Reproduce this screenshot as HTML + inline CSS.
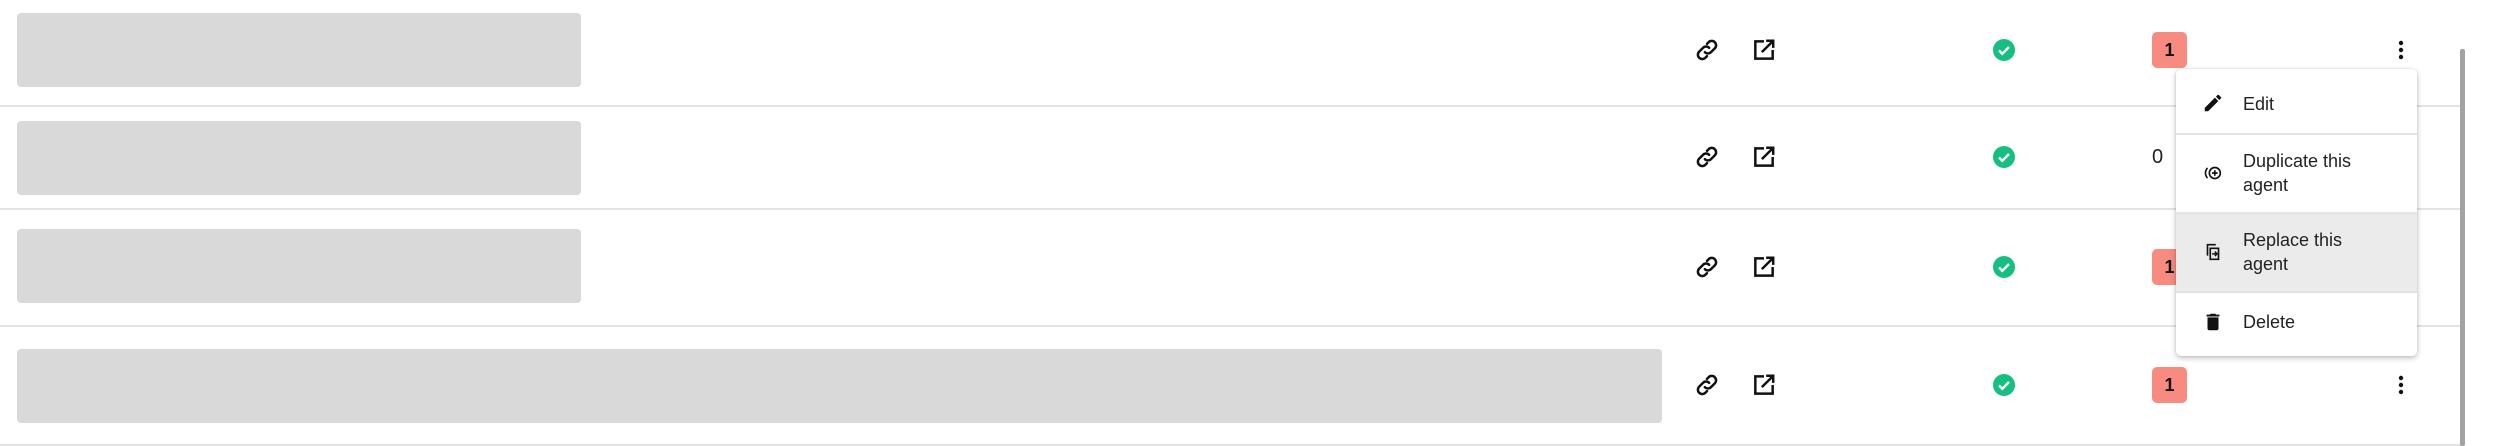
<!DOCTYPE html>
<html><head><style>
*{margin:0;padding:0;box-sizing:border-box}
body{width:2500px;height:446px;background:#fff;position:relative;overflow:hidden;font-family:"Liberation Sans",Arial,sans-serif;color:#212121}
.abs{position:absolute}
.sep{position:absolute;left:0;width:2462px;height:2px;background:#e3e3e3}
.bar{position:absolute;left:17px;background:#d9d9d9;border-radius:4px}
.badge{position:absolute;width:35px;height:36px;background:#f78b80;border-radius:5px;font-size:18px;font-weight:bold;line-height:36px;text-align:center;color:#111}
.menu{position:absolute;left:2176px;top:69px;width:241px;height:287px;background:#fff;border-radius:5px;box-shadow:0 2px 6px rgba(0,0,0,.25),0 0 2px rgba(0,0,0,.1);overflow:hidden}
.mi{position:absolute;left:0;width:241px;font-size:18px;line-height:24px;color:#222}
.mi .t{position:absolute;left:67px}
.mi svg{position:absolute;left:26px}
.msep{position:absolute;left:0;width:241px;height:2px;background:#e3e3e3}
</style></head><body>
<div class="sep" style="top:105px"></div>
<div class="sep" style="top:208px"></div>
<div class="sep" style="top:325px"></div>
<div class="sep" style="top:444px"></div>
<div class="bar" style="top:13px;width:564px;height:74px"></div>
<div class="bar" style="top:121px;width:564px;height:74px"></div>
<div class="bar" style="top:229px;width:564px;height:74px"></div>
<div class="bar" style="top:349px;width:1645px;height:74px"></div>

<svg width="0" height="0" style="position:absolute"><defs>
<symbol id="lk" viewBox="0 0 24 24"><path fill="none" stroke="#111" stroke-width="2.3" stroke-linecap="round" d="M10 14a4 4 0 0 0 5.7 0l3.5-3.5a4 4 0 0 0-5.7-5.7l-1.5 1.5M14 10a4 4 0 0 0-5.7 0l-3.5 3.5a4 4 0 0 0 5.7 5.7l1.5-1.5"/></symbol>
<symbol id="ex" viewBox="0 0 24 24"><path fill="none" stroke="#111" stroke-width="2.3" d="M12 4H4v16h16v-8"/><path fill="none" stroke="#111" stroke-width="2.3" d="M10 14L20 4M14 3.5h6.5V10"/></symbol>
<symbol id="ck" viewBox="0 0 24 24"><circle cx="12" cy="12" r="11" fill="#14bf7f"/><path d="M7 12.5l3.3 3.3L17 9" fill="none" stroke="#fff" stroke-width="2.4"/></symbol>
<symbol id="kb" viewBox="0 0 24 24"><circle cx="12" cy="5" r="2.2" fill="#111"/><circle cx="12" cy="12" r="2.2" fill="#111"/><circle cx="12" cy="19" r="2.2" fill="#111"/></symbol>
</defs></svg>

<svg class="abs" style="left:1694px;top:37px" width="26" height="26"><use href="#lk"/></svg>
<svg class="abs" style="left:1751px;top:37px" width="26" height="26"><use href="#ex"/></svg>
<svg class="abs" style="left:1992px;top:38px" width="24" height="24"><use href="#ck"/></svg>
<div class="badge" style="left:2152px;top:32px">1</div>
<svg class="abs" style="left:2389px;top:37px" width="24" height="26"><use href="#kb"/></svg>

<svg class="abs" style="left:1694px;top:144px" width="26" height="26"><use href="#lk"/></svg>
<svg class="abs" style="left:1751px;top:144px" width="26" height="26"><use href="#ex"/></svg>
<svg class="abs" style="left:1992px;top:145px" width="24" height="24"><use href="#ck"/></svg>
<div class="abs" style="left:2152px;top:145px;font-size:20px;line-height:24px">0</div>

<svg class="abs" style="left:1694px;top:254px" width="26" height="26"><use href="#lk"/></svg>
<svg class="abs" style="left:1751px;top:254px" width="26" height="26"><use href="#ex"/></svg>
<svg class="abs" style="left:1992px;top:255px" width="24" height="24"><use href="#ck"/></svg>
<div class="badge" style="left:2152px;top:249px">1</div>

<svg class="abs" style="left:1694px;top:372px" width="26" height="26"><use href="#lk"/></svg>
<svg class="abs" style="left:1751px;top:372px" width="26" height="26"><use href="#ex"/></svg>
<svg class="abs" style="left:1992px;top:373px" width="24" height="24"><use href="#ck"/></svg>
<div class="badge" style="left:2152px;top:367px">1</div>
<svg class="abs" style="left:2389px;top:372px" width="24" height="26"><use href="#kb"/></svg>

<div class="abs" style="left:2460px;top:49px;width:5px;height:397px;background:#a3a3a3;border-radius:2px"></div>

<div class="menu">
  <div class="mi" style="top:0;height:64px">
    <svg style="top:23px" width="22" height="22" viewBox="0 0 24 24"><path fill="#111" d="M3 17.3V21h3.7L17.8 9.9l-3.7-3.7zM20.7 7a1 1 0 0 0 0-1.4l-2.3-2.3a1 1 0 0 0-1.4 0l-1.8 1.8 3.7 3.7z"/></svg>
    <span class="t" style="top:23px">Edit</span>
  </div>
  <div class="msep" style="top:64px"></div>
  <div class="mi" style="top:66px;height:77px">
    <svg style="top:27px" width="22" height="22" viewBox="0 0 24 24"><circle cx="14" cy="12" r="6" fill="none" stroke="#111" stroke-width="1.8"/><path d="M14 9v6M11 12h6" stroke="#111" stroke-width="1.8"/><path d="M6 6.5a8 8 0 0 0 0 11" fill="none" stroke="#111" stroke-width="1.8"/></svg>
    <span class="t" style="top:14px">Duplicate this<br>agent</span>
  </div>
  <div class="msep" style="top:143px"></div>
  <div class="mi" style="top:145px;height:77px;background:#ebebeb">
    <svg style="top:27px" width="22" height="22" viewBox="0 0 24 24"><path fill="none" stroke="#111" stroke-width="1.8" d="M6 16V4h9M9 8h9v12H9z"/><path d="M11 14h5M14 11.5l2.5 2.5-2.5 2.5" fill="none" stroke="#111" stroke-width="1.6"/></svg>
    <span class="t" style="top:14px">Replace this<br>agent</span>
  </div>
  <div class="msep" style="top:222px"></div>
  <div class="mi" style="top:224px;height:63px">
    <svg style="top:17px" width="22" height="24" viewBox="0 0 24 24"><path fill="#111" d="M6 19a2 2 0 0 0 2 2h8a2 2 0 0 0 2-2V7H6zM19 4h-3.5l-1-1h-5l-1 1H5v2h14z"/></svg>
    <span class="t" style="top:17px">Delete</span>
  </div>
</div>
</body></html>
